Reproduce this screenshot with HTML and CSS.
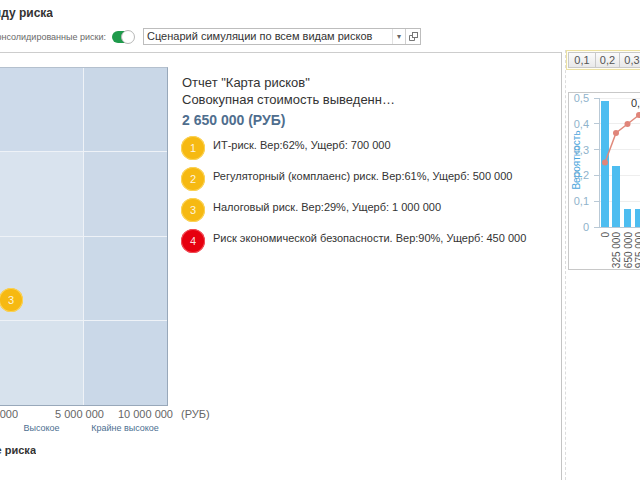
FILE: index.html
```html
<!DOCTYPE html>
<html lang="ru">
<head>
<meta charset="utf-8">
<title>Карта рисков</title>
<link rel="stylesheet" href="styles.css">
</head>
<body>
<div class="app">
  <div class="title"><span class="clip clip-title"><span>Карта рисков по виду риска</span></span></div>

  <div class="toolbar">
    <span class="clip clip-label"><span>Консолидированные риски:</span></span>
    <span class="toggle"><span class="knob"></span></span>
    <div class="select">
      <span class="select-text">Сценарий симуляции по всем видам рисков</span>
      <span class="select-arrow">▾</span>
      <span class="select-btn">
        <svg width="9" height="9" viewBox="0 0 9 9" fill="none" stroke="#777" stroke-width="1">
          <rect x="3.5" y="0.5" width="5" height="5"/>
          <path d="M3.5 3.5H0.5V8.5H5.5V5.5"/>
        </svg>
      </span>
    </div>
  </div>

  <div class="content">
    <div class="left-panel">
      <div class="map-row">
        <div class="map-col">
          <div class="map">
            <div class="cell c11"></div><div class="cell c12"></div>
            <div class="cell c21"></div><div class="cell c22"></div>
            <div class="cell c31"></div><div class="cell c32"></div>
            <div class="cell c41"></div><div class="cell c42"></div>
            <span class="dot yellow map-dot">3</span>
          </div>
          <div class="axis">
            <span class="clip clip-axis"><span>1 000 000</span></span>
            <span class="tick tick-5">5 000 000</span>
            <span class="tick tick-10">10 000 000</span>
            <span class="tick tick-cur">(РУБ)</span>
          </div>
          <div class="cats">
            <span class="cat">Высокое</span>
            <span class="cat">Крайне высокое</span>
          </div>
        </div>

        <div class="legend">
          <div class="legend-line">Отчет "Карта рисков"</div>
          <div class="legend-line ellipsis">Совокупная стоимость выведенных рисков</div>
          <div class="legend-total">2 650 000 (РУБ)</div>
          <div class="items">
            <div class="item"><span class="dot yellow">1</span><span class="item-text">ИТ-риск. Вер:62%, Ущерб: 700 000</span></div>
            <div class="item"><span class="dot yellow">2</span><span class="item-text">Регуляторный (комплаенс) риск. Вер:61%, Ущерб: 500 000</span></div>
            <div class="item"><span class="dot yellow">3</span><span class="item-text">Налоговый риск. Вер:29%, Ущерб: 1 000 000</span></div>
            <div class="item"><span class="dot red">4</span><span class="item-text">Риск экономической безопасности. Вер:90%, Ущерб: 450 000</span></div>
          </div>
        </div>
      </div>
      <div class="section-title"><span class="clip clip-section"><span>Описание риска</span></span></div>
    </div>

    <div class="right-panel">
      <div class="btnbar">
        <span class="btn b1">0,1</span>
        <span class="btn b2">0,2</span>
        <span class="btn b3">0,3</span>
        <span class="btn b3">0,4</span>
        <span class="btn b3">0,5</span>
      </div>
      <div class="chart">
        <svg width="160" height="176" viewBox="0 0 160 176">
          <g stroke="#eeeeee" stroke-width="1">
            <line x1="30" y1="5.5" x2="160" y2="5.5"/>
            <line x1="30" y1="30.5" x2="160" y2="30.5"/>
            <line x1="30" y1="56.5" x2="160" y2="56.5"/>
            <line x1="30" y1="82.5" x2="160" y2="82.5"/>
            <line x1="30" y1="108.5" x2="160" y2="108.5"/>
          </g>
          <g fill="#8fb3cb" font-family="Liberation Sans, Arial, sans-serif" font-size="11" text-anchor="end">
            <text x="20" y="9">0,5</text>
            <text x="20" y="35">0,4</text>
            <text x="20" y="61">0,3</text>
            <text x="20" y="86">0,2</text>
            <text x="20" y="112">0,1</text>
            <text x="20" y="138">0</text>
          </g>
          <g stroke="#b9c9d6" stroke-width="1">
            <line x1="30.5" y1="5" x2="30.5" y2="134"/>
            <line x1="25" y1="5.5" x2="30" y2="5.5"/>
            <line x1="25" y1="30.5" x2="30" y2="30.5"/>
            <line x1="25" y1="56.5" x2="30" y2="56.5"/>
            <line x1="25" y1="82.5" x2="30" y2="82.5"/>
            <line x1="25" y1="108.5" x2="30" y2="108.5"/>
            <line x1="25" y1="134.5" x2="160" y2="134.5"/>
          </g>
          <text x="11" y="67" transform="rotate(-90 11 67)" text-anchor="middle" fill="#4ca6dc" font-family="Liberation Sans, Arial, sans-serif" font-size="10">Вероятность</text>
          <g fill="#4dbdf0">
            <rect x="32" y="8" width="8" height="126"/>
            <rect x="43" y="73" width="8" height="61"/>
            <rect x="55" y="116" width="7" height="18"/>
            <rect x="66" y="116" width="8" height="18"/>
          </g>
          <polyline points="36,69.5 47,40 58.5,31 70,22" fill="none" stroke="#e08a7c" stroke-width="1.5"/>
          <g fill="#e0857a">
            <circle cx="36" cy="69.5" r="3"/>
            <circle cx="47" cy="40" r="3"/>
            <circle cx="58.5" cy="31" r="3"/>
            <circle cx="70" cy="22" r="3"/>
          </g>
          <text x="62" y="14" fill="#333" font-family="Liberation Sans, Arial, sans-serif" font-size="11">0,44</text>
          <g fill="#555" font-family="Liberation Sans, Arial, sans-serif" font-size="10" text-anchor="end">
            <text x="40" y="139" transform="rotate(-90 40 139)">0</text>
            <text x="51" y="139" transform="rotate(-90 51 139)">325 000</text>
            <text x="62.5" y="139" transform="rotate(-90 62.5 139)">650 000</text>
            <text x="74" y="139" transform="rotate(-90 74 139)">975 000</text>
          </g>
        </svg>
      </div>
    </div>
  </div>
</div>
</body>
</html>
```

FILE: styles.css
```css
* { box-sizing: border-box; }
html, body { margin: 0; padding: 0; overflow: hidden; }
body {
  width: 640px;
  height: 480px;
  background: #fff;
  font-family: "Liberation Sans", Arial, sans-serif;
  color: #333;
}
.app { width: 640px; height: 480px; overflow: hidden; }

.clip {
  display: flex;
  justify-content: flex-end;
  overflow: hidden;
  white-space: nowrap;
  flex: none;
}
.clip > span { flex: none; }

.title {
  height: 26px;
  padding-top: 5px;
  font-size: 12px;
  font-weight: bold;
  line-height: 16px;
  color: #333;
}
.clip-title { width: 53px; }

.toolbar {
  display: flex;
  align-items: center;
  height: 17px;
  margin-top: 2px;
  margin-bottom: 5px;
}
.clip-label { width: 106px; font-size: 9px; color: #6a6a6a; }
.toggle {
  position: relative;
  width: 22px;
  height: 12px;
  margin-left: 6px;
  border-radius: 6px;
  background: #1f9a4b;
  flex: none;
}
.knob {
  position: absolute;
  right: -1px;
  top: -1px;
  width: 14px;
  height: 14px;
  border-radius: 50%;
  background: #fff;
  border: 1px solid #b8b8b8;
}
.select {
  display: flex;
  margin-left: 9px;
  width: 278px;
  height: 17px;
  border: 1px solid #bdbdbd;
  font-size: 11px;
}
.select-text {
  flex: 1;
  padding-left: 3px;
  line-height: 15px;
  color: #333;
  white-space: nowrap;
  overflow: hidden;
}
.select-arrow {
  width: 13px;
  border-left: 1px solid #e2e2e2;
  font-size: 8px;
  line-height: 15px;
  text-align: center;
  color: #666;
}
.select-btn {
  width: 15px;
  border-left: 1px solid #cfcfcf;
  display: flex;
  align-items: center;
  justify-content: center;
}

.content {
  display: flex;
  height: 430px;
}
.left-panel {
  width: 562px;
  margin-top: 2px;
  border-top: 1px solid #cdcdcd;
  border-right: 1px solid #c4c4c4;
  padding-top: 14px;
  flex: none;
}
.map-row { display: flex; }
.map-col { width: 168px; flex: none; }
.map {
  position: relative;
  display: grid;
  grid-template-columns: 83px 83px;
  grid-template-rows: 83px 84px 83px 84px;
  gap: 1px;
  background: #eef2f7;
  border-top: 1px solid #b4c0ce;
  border-right: 1px solid #98a8ba;
  border-bottom: 1px solid #98a8ba;
}
.c11 { background: #cddaea; }
.c12 { background: #c9d7e7; }
.c21 { background: #d9e3ee; }
.c22 { background: #ccd9e8; }
.c31 { background: #d8e2ed; }
.c32 { background: #cbd9e8; }
.c41 { background: #d7e2ed; }
.c42 { background: #cad8e8; }

.dot {
  width: 24px;
  height: 24px;
  border-radius: 50%;
  flex: none;
  display: flex;
  align-items: center;
  justify-content: center;
  font-size: 11px;
  color: rgba(255, 255, 255, 0.88);
}
.yellow { background: #f6b912; box-shadow: inset 0 0 0 1px #fbd45a; }
.red { background: #e6000f; box-shadow: inset 0 0 0 1px #f2505a; }
.map-dot { position: absolute; left: -1px; top: 220px; }

.axis {
  display: flex;
  height: 15px;
  padding-top: 1px;
  font-size: 11px;
  line-height: 14px;
  color: #666;
  white-space: nowrap;
}
.clip-axis { width: 18px; }
.tick-5 { margin-left: 37px; }
.tick-10 { margin-left: 14px; }
.tick-cur { margin-left: 8px; }

.cats {
  display: grid;
  grid-template-columns: 83px 84px;
  height: 18px;
  padding-top: 1px;
  font-size: 9px;
  line-height: 12px;
  color: #4d6f91;
  text-align: center;
  white-space: nowrap;
}

.legend {
  margin-left: 14px;
  padding-top: 7px;
}
.legend-line {
  font-size: 13px;
  line-height: 17px;
  color: #333;
  white-space: nowrap;
}
.ellipsis {
  width: 216px;
  overflow: hidden;
  text-overflow: ellipsis;
}
.legend-total {
  margin-top: 3px;
  font-size: 14px;
  font-weight: bold;
  line-height: 18px;
  color: #4f6e8e;
}
.items { margin-top: 7px; margin-left: -1px; }
.item {
  display: flex;
  align-items: flex-start;
  height: 24px;
  margin-bottom: 7px;
}
.item-text {
  margin-left: 8px;
  padding-top: 3px;
  font-size: 11px;
  line-height: 13px;
  color: #333;
  white-space: nowrap;
}

.section-title {
  margin-top: 3px;
  font-size: 11px;
  font-weight: bold;
  line-height: 16px;
  color: #333;
}
.clip-section { width: 36px; }

.right-panel {
  width: 200px;
  margin-left: 3px;
  border-left: 1px dashed #dcdcdc;
  flex: none;
}
.btnbar {
  display: flex;
  height: 20px;
  padding: 1px 1px;
  border: 1px solid #ece1a2;
  background: #fffef4;
}
.btn {
  height: 16px;
  border: 1px solid #c9c9c9;
  margin-left: -1px;
  background: linear-gradient(#fbfbfb, #e9e9e9);
  font-size: 11px;
  line-height: 14px;
  color: #555;
  text-align: center;
  flex: none;
}
.b1 { width: 28px; margin-left: 0; }
.b2 { width: 25px; }
.b3 { width: 26px; }

.chart {
  margin-top: 22px;
  margin-left: 2px;
  width: 160px;
  height: 178px;
  border: 1px solid #c8c8c8;
}
.chart svg { display: block; }
```
